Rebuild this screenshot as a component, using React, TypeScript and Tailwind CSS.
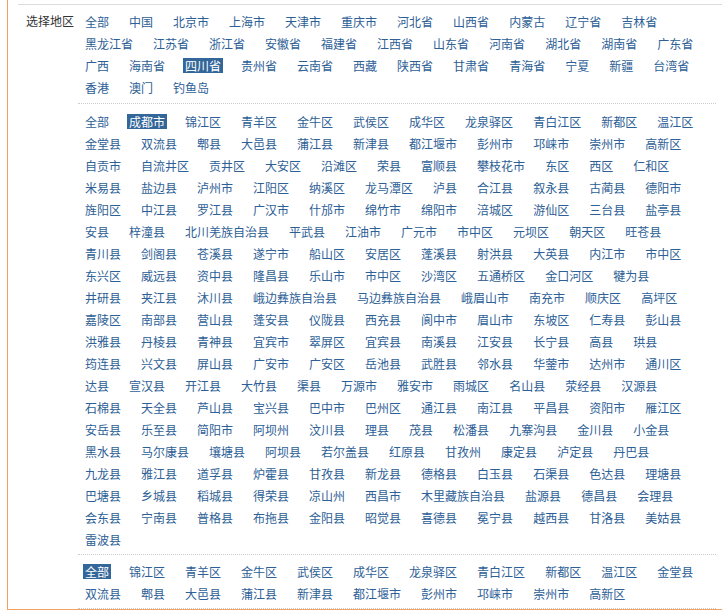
import React from "react";

const provinces = [
  "全部", "中国", "北京市", "上海市", "天津市", "重庆市", "河北省", "山西省", "内蒙古", "辽宁省", "吉林省",
  "黑龙江省", "江苏省", "浙江省", "安徽省", "福建省", "江西省", "山东省", "河南省", "湖北省", "湖南省", "广东省",
  "广西", "海南省", "四川省", "贵州省", "云南省", "西藏", "陕西省", "甘肃省", "青海省", "宁夏", "新疆", "台湾省",
  "香港", "澳门", "钓鱼岛",
];

const cities = [
  "全部", "成都市", "锦江区", "青羊区", "金牛区", "武侯区", "成华区", "龙泉驿区", "青白江区", "新都区", "温江区",
  "金堂县", "双流县", "郫县", "大邑县", "蒲江县", "新津县", "都江堰市", "彭州市", "邛崃市", "崇州市", "高新区",
  "自贡市", "自流井区", "贡井区", "大安区", "沿滩区", "荣县", "富顺县", "攀枝花市", "东区", "西区", "仁和区",
  "米易县", "盐边县", "泸州市", "江阳区", "纳溪区", "龙马潭区", "泸县", "合江县", "叙永县", "古蔺县", "德阳市",
  "旌阳区", "中江县", "罗江县", "广汉市", "什邡市", "绵竹市", "绵阳市", "涪城区", "游仙区", "三台县", "盐亭县",
  "安县", "梓潼县", "北川羌族自治县", "平武县", "江油市", "广元市", "市中区", "元坝区", "朝天区", "旺苍县",
  "青川县", "剑阁县", "苍溪县", "遂宁市", "船山区", "安居区", "蓬溪县", "射洪县", "大英县", "内江市", "市中区",
  "东兴区", "威远县", "资中县", "隆昌县", "乐山市", "市中区", "沙湾区", "五通桥区", "金口河区", "犍为县",
  "井研县", "夹江县", "沐川县", "峨边彝族自治县", "马边彝族自治县", "峨眉山市", "南充市", "顺庆区", "高坪区",
  "嘉陵区", "南部县", "营山县", "蓬安县", "仪陇县", "西充县", "阆中市", "眉山市", "东坡区", "仁寿县", "彭山县",
  "洪雅县", "丹棱县", "青神县", "宜宾市", "翠屏区", "宜宾县", "南溪县", "江安县", "长宁县", "高县", "珙县",
  "筠连县", "兴文县", "屏山县", "广安市", "广安区", "岳池县", "武胜县", "邻水县", "华蓥市", "达州市", "通川区",
  "达县", "宣汉县", "开江县", "大竹县", "渠县", "万源市", "雅安市", "雨城区", "名山县", "荥经县", "汉源县",
  "石棉县", "天全县", "芦山县", "宝兴县", "巴中市", "巴州区", "通江县", "南江县", "平昌县", "资阳市", "雁江区",
  "安岳县", "乐至县", "简阳市", "阿坝州", "汶川县", "理县", "茂县", "松潘县", "九寨沟县", "金川县", "小金县",
  "黑水县", "马尔康县", "壤塘县", "阿坝县", "若尔盖县", "红原县", "甘孜州", "康定县", "泸定县", "丹巴县",
  "九龙县", "雅江县", "道孚县", "炉霍县", "甘孜县", "新龙县", "德格县", "白玉县", "石渠县", "色达县", "理塘县",
  "巴塘县", "乡城县", "稻城县", "得荣县", "凉山州", "西昌市", "木里藏族自治县", "盐源县", "德昌县", "会理县",
  "会东县", "宁南县", "普格县", "布拖县", "金阳县", "昭觉县", "喜德县", "冕宁县", "越西县", "甘洛县", "美姑县",
  "雷波县",
];

const districts = [
  "全部", "锦江区", "青羊区", "金牛区", "武侯区", "成华区", "龙泉驿区", "青白江区", "新都区", "温江区", "金堂县",
  "双流县", "郫县", "大邑县", "蒲江县", "新津县", "都江堰市", "彭州市", "邛崃市", "崇州市", "高新区",
];

function AreaList({ items, selected }: { items: string[]; selected: number }) {
  return (
    <ul className="flex flex-wrap pl-[5px]">
      {items.map((name, i) => (
        <li key={i} className="flex h-[22px] items-center mr-[16px]">
          <a
            href="#"
            className={
              i === selected
                ? "block px-[2px] leading-[15px] bg-[#336699] text-white"
                : "block px-[2px] leading-[15px] text-[#2d6096]"
            }
          >
            {name}
          </a>
        </li>
      ))}
    </ul>
  );
}

export default function App() {
  return (
    <div
      className="w-[722px] bg-white text-[12px]"
      style={{ fontFamily: '"Noto Sans CJK SC", "Noto Sans", sans-serif' }}
    >
      <div className="ml-[7px] border-l border-b border-[#f3a060] pt-[4px]">
        <div className="ml-[10px] border-t border-[#dcdcdc] flex">
          <div className="w-[60px] shrink-0 pl-[8px] pt-[5px] leading-[22px] text-[#333333]">选择地区</div>
          <div className="w-[638px] pt-[5px]">
            <AreaList items={provinces} selected={24} />
            <div className="mt-[5px] border-t border-dotted border-[#cccccc] pt-[6px]">
              <AreaList items={cities} selected={1} />
            </div>
            <div className="mt-[4px] border-t border-b border-dotted border-[#cccccc] pt-[5px] pb-[4px]">
              <AreaList items={districts} selected={0} />
            </div>
          </div>
        </div>
      </div>
    </div>
  );
}
